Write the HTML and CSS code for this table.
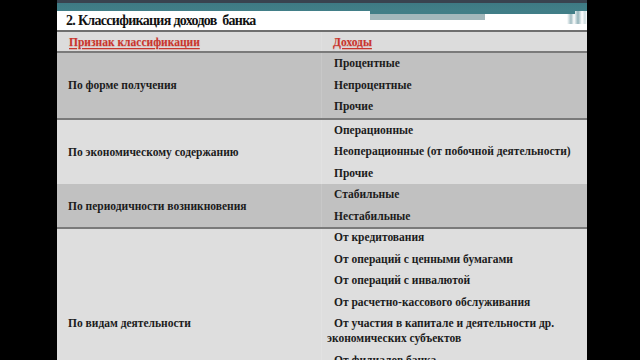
FILE: index.html
```html
<!DOCTYPE html>
<html lang="ru">
<head>
<meta charset="utf-8">
<title>Классификация доходов банка</title>
<link rel="stylesheet" href="styles.css">
</head>
<body>
<div class="slide">
  <div class="titlebar">
    <h1 class="title">2. Классификация доходов&nbsp; банка</h1>
  </div>
  <div class="table">
    <div class="row row-head">
      <div class="cell-left"><span class="head-text">Признак классификации</span></div>
      <div class="cell-right"><span class="head-text">Доходы</span></div>
    </div>
    <div class="row row-dark">
      <div class="cell-left">По форме получения</div>
      <div class="cell-right">
        <p class="item">Процентные</p>
        <p class="item">Непроцентные</p>
        <p class="item">Прочие</p>
      </div>
    </div>
    <div class="row row-light no-line">
      <div class="cell-left">По экономическому содержанию</div>
      <div class="cell-right">
        <p class="item">Операционные</p>
        <p class="item">Неоперационные (от побочной деятельности)</p>
        <p class="item">Прочие</p>
      </div>
    </div>
    <div class="row row-dark">
      <div class="cell-left">По периодичности возникновения</div>
      <div class="cell-right">
        <p class="item">Стабильные</p>
        <p class="item">Нестабильные</p>
      </div>
    </div>
    <div class="row row-light row-tall">
      <div class="cell-left">По видам деятельности</div>
      <div class="cell-right">
        <p class="item">От кредитования</p>
        <p class="item">От операций с ценными бумагами</p>
        <p class="item">От операций с инвалютой</p>
        <p class="item">От расчетно-кассового обслуживания</p>
        <p class="item">От участия в капитале и деятельности др. экономических субъектов</p>
        <p class="item">От филиалов банка</p>
        <p class="item">Прочие</p>
      </div>
    </div>
  </div>
</div>
</body>
</html>
```
FILE: styles.css
```css
html, body {
  margin: 0;
  padding: 0;
  background: #000;
}
body {
  width: 640px;
  height: 360px;
  overflow: hidden;
  font-family: "Liberation Serif", "DejaVu Serif", serif;
  color: #1c1c1c;
}
.slide {
  margin-left: 57px;
  width: 530px;
  height: 360px;
  overflow: hidden;
  background: #dedede;
}
.titlebar {
  height: 30px;
  box-sizing: border-box;
  padding: 13px 0 0 9px;
  background-color: #fff;
  background-image:
    linear-gradient(#39434f, #39434f),
    linear-gradient(#3e7a84, #427f88),
    linear-gradient(#417e87, #417e87),
    linear-gradient(#f4f7f7, #f4f7f7),
    linear-gradient(#a3b8bc, #a3b8bc),
    linear-gradient(90deg, rgba(255,255,255,0) 0%, rgba(150,180,186,.9) 20%, #fff 35%, rgba(120,160,168,.8) 55%, #fff 75%, rgba(190,210,214,.8) 90%, #fff 100%);
  background-repeat: no-repeat;
  background-size:
    100% 3px,
    100% 8px,
    205px 3px,
    178px 1px,
    115px 6px,
    20px 24px;
  background-position:
    0 0,
    0 3px,
    313px 11px,
    313px 13px,
    313px 14px,
    510px 0;
}
.title {
  margin: 0;
  font-size: 14px;
  font-weight: bold;
  line-height: 16px;
  color: #111;
  letter-spacing: -0.7px;
}
.table {
  border-top: 2px solid #6f6f6f;
}
.row {
  display: grid;
  grid-template-columns: 265px 265px;
  border-bottom: 2px solid #7a7a7a;
  font-size: 11.5px;
  font-weight: bold;
}
.row.no-line {
  border-bottom: 0;
}
.row-head {
  height: 19px;
  background: #dcdcdc;
}
.row-dark {
  background: #c1c1c1;
}
.row-light {
  background: #dedede;
}
.row-tall {
  min-height: 188px;
}
.row-tall .item:first-child {
  padding-top: 1px;
}
.cell-left {
  display: flex;
  align-items: center;
  padding-left: 11px;
  border-right: 1px solid rgba(255,255,255,0.12);
}
.row-head .cell-left,
.row-head .cell-right {
  display: flex;
  align-items: center;
}
.cell-right {
  padding: 0 6px 0 5px;
}
.head-text {
  color: #c9352d;
  text-decoration: underline;
  text-decoration-thickness: 1px;
  text-underline-offset: 2px;
  text-shadow: 0 1px 1px rgba(210,90,80,0.35);
  padding-left: 1px;
}
.row-head .cell-right .head-text {
  padding-left: 6px;
}
.item {
  margin: 0;
  padding: 3px 0 3.5px;
  line-height: 15px;
  text-indent: 7px;
}
```
